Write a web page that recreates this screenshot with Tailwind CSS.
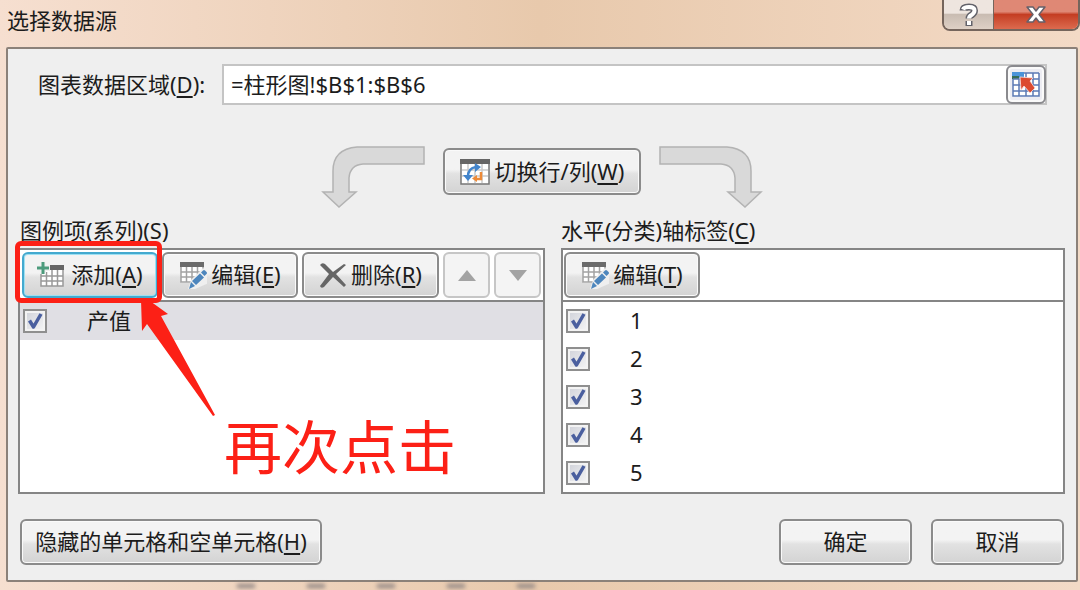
<!DOCTYPE html>
<html lang="zh-CN">
<head>
<meta charset="utf-8">
<title>选择数据源</title>
<script src="https://cdn.jsdelivr.net/npm/@tailwindcss/browser@4"></script>
</head>
<body class="relative flex min-h-screen flex-col overflow-x-hidden bg-linear-to-r from-[#f6dfd0] via-[#e8c9ac] to-[#f3dac6] font-['Noto_Sans','Noto_Sans_CJK_SC',sans-serif] text-[22px] leading-7 text-[#1c1c1c]">

<!-- Shared icons -->
<svg class="hidden" aria-hidden="true">
  <symbol id="edit" viewBox="0 0 28 28">
    <path fill="#fff" d="M2 2h22v20H2z"/>
    <path fill="none" stroke="#a3a3a3" stroke-width="1.5" d="M2 6v15h22V6M7.500 6v15M13 6v15M18.500 6v15M2 11h22M2 16h22"/>
    <path fill="#6b6b6b" d="M1 1h24v5H1z"/>
    <path fill="#efefef" d="M9 28l3-9L24 7l6 5v10L16 28z"/>
    <path fill="#4d86bd" d="M10 28l2-7 4 4zM13 20l8-7.500 4 4-8 7.500zM22 11.500l2-2q1-1 2 0l1.500 1.500q1 1 0 2l-2 2z"/>
  </symbol>
  <symbol id="tick" viewBox="0 0 24 24">
    <path fill="none" stroke="#4a5f9f" stroke-width="3.500" stroke-linejoin="round" d="M6.500 11.500l4 6.500L18 5"/>
  </symbol>
  <symbol id="bend" viewBox="0 0 104 62">
    <path fill="#d9d9d9" stroke="#b3b3b3" stroke-width="1.500" d="M103 1H36Q12 3 12 25v21H2l16 15 17-15H28V32Q29 19 42 18h61z"/>
  </symbol>
</svg>

<header class="flex h-[47px] items-start justify-between pl-[7px]">
  <h1 class="pt-1.5">选择数据源</h1>
  <div class="flex h-[31px] overflow-hidden rounded-b-lg border-2 border-t-0 border-[#75655c]">
    <button type="button" aria-label="帮助" class="grid w-[50px] place-items-center border-r border-[#75655c] bg-linear-to-b from-[#eee5df] from-45% via-[#c9bcb2] via-50% to-[#ded0c5]">
      <svg class="h-6 w-5" viewBox="0 0 20 24" fill="none"><path stroke="#62626a" stroke-width="7" d="M4 7.500Q4 4 10 4q5.500 0 5.500 3.500 0 2.500-3 4.500-2.500 1.500-2.500 3.500M10 18v5"/><path stroke="#fff" stroke-width="4" d="M4 6.500Q5 4 10 4q5.500 0 5.500 3.500 0 2.500-3 4.500-2.500 1.500-2.500 3.500M10 18v4"/></svg>
    </button>
    <button type="button" aria-label="关闭" class="grid w-[84px] place-items-center bg-linear-to-b from-[#df8875] from-40% via-[#c43d22] via-50% to-[#dc6a4e]">
      <svg class="h-5 w-6" viewBox="0 0 24 20"><path fill="#fff" stroke="#66606a" stroke-width="1.500" stroke-linejoin="round" d="M3 2h6l3 4 3-4h6l-6 7.500 6 7.500h-6l-3-4-3 4H3l6-7.500z"/></svg>
    </button>
  </div>
</header>

<main class="mr-0.5 mb-2 ml-1.5 flex flex-1 flex-col rounded-xs border-2 border-[#8b8179] bg-[#efefef]">
  <div class="mt-[15px] flex items-center pr-[29px] pl-[30px]">
    <label for="range" class="w-[184px] shrink-0 pb-0.5">图表数据区域(<u class="underline-offset-3">D</u>):</label>
    <div class="flex h-[41px] flex-1 border-2 border-[#c4c4c4] bg-white">
      <input id="range" type="text" value="=柱形图!$B$1:$B$6" class="min-w-0 flex-1 bg-transparent pb-0.5 pl-[7px] outline-none">
      <button type="button" aria-label="选择区域" class="-my-px -mr-px grid w-10 place-items-center rounded-md border-2 border-[#8a8a8e] bg-[#ececf2] shadow-[inset_0_0_0_2px_#fafafa]">
        <svg class="size-7" viewBox="0 0 28 28"><path fill="#fff" d="M1 2h26v24H1z"/><path fill="#4a93d9" d="M0 1h12v6H0z"/><path fill="#356c55" d="M0 5h7v3H0z"/><path fill="none" stroke="#5b79b5" stroke-width="1.500" d="M1 8v17h26V2M12 2h15M1 8h26M1 14h26M1 20h26M7 8v17M14 2v23M21 2v23"/><path fill="#dc4b30" stroke="#f8e0dc" stroke-width=".8" d="M8 6l13 1-3 3 5 7-5 5-6-7-3 4z"/></svg>
      </button>
    </div>
  </div>

  <div class="mt-[41px] flex items-start justify-center gap-[18px]">
    <svg class="h-[62px] w-[104px]" aria-hidden="true"><use href="#bend"/></svg>
    <button type="button" class="mt-0.5 flex h-[47px] w-[198px] items-center justify-center gap-[5px] rounded-md border-2 border-[#8b8b8b] bg-linear-to-b from-[#f3f3f3] from-45% via-[#e2e2e2] via-55% to-[#d3d3d3] shadow-[inset_0_0_0_1px_#fafafa]">
      <svg class="h-7 w-[30px]" viewBox="0 0 30 28"><path fill="#fff" stroke="#777" stroke-width="1.500" d="M1 2h28v24H1z"/><path stroke="#c9c9c9" stroke-width="1.500" d="M2 12h26M2 18h26M8 6v19M15 6v19M22 6v19"/><path fill="#666" d="M0 1h30v5H0z"/><path fill="none" stroke="#4385cc" stroke-width="2.500" d="M8 19q0-9 8-10"/><path fill="#4385cc" d="M3 17h10l-5 6zM15 5l6 4-6 5z"/><path fill="none" stroke="#ed8a38" stroke-width="2.500" d="M21 14v7h-5"/><path fill="#ed8a38" d="M17 17v7l-5-3.500z"/></svg>
      <span class="pb-0.5">切换行/列(<u class="underline-offset-3">W</u>)</span>
    </button>
    <svg class="h-[62px] w-[104px] -scale-x-100" aria-hidden="true"><use href="#bend"/></svg>
  </div>

  <div class="mt-[9px] grid flex-1 grid-cols-[527fr_505fr] gap-4 pr-[11px] pl-2.5">
    <section class="flex flex-col" aria-labelledby="series">
      <h2 id="series" class="-mt-px h-8 pl-0.5">图例项(系列)(S)</h2>
      <div class="relative flex-1 border-2 border-[#858585] bg-white">
        <div class="flex h-[52px] items-center gap-1 border-b-2 border-[#858585] px-0.5">
          <div class="relative">
            <button type="button" class="flex h-[46px] w-[136px] items-center justify-center gap-1.5 rounded-md border-2 border-[#43a9cf] bg-linear-to-b from-[#f3f3f3] from-45% via-[#e2e2e2] via-55% to-[#d3d3d3] shadow-[inset_0_0_0_1px_#9de0f2]">
              <svg class="size-7" viewBox="0 0 28 28"><path fill="#fff" d="M4 7h22v18H4z"/><path fill="none" stroke="#999" stroke-width="1.500" d="M4 11v14h22V5M9.500 11v14M15 9v16M20.500 9v16M4 15h22M4 20h22"/><path fill="#666" d="M13 4h14v5H13z"/><path stroke="#f0f0f0" stroke-width="6" d="M6 1v12M1 7h12"/><path stroke="#4c9b7c" stroke-width="3" d="M6 1v12M0 7h12"/></svg>
              <span class="pb-0.5">添加(<u class="underline-offset-3">A</u>)</span>
            </button>
            <!-- Highlight frame around the add button -->
            <div class="pointer-events-none absolute -top-[11px] -right-1 -bottom-[5px] -left-[7px] z-10 rounded-md border-5 border-[#fc2016]"></div>
          </div>
          <button type="button" class="flex h-[46px] w-[136px] items-center justify-center gap-1 rounded-md border-2 border-[#8b8b8b] bg-linear-to-b from-[#f3f3f3] from-45% via-[#e2e2e2] via-55% to-[#d3d3d3] shadow-[inset_0_0_0_1px_#fafafa]">
            <svg class="size-7" aria-hidden="true"><use href="#edit"/></svg><span class="pb-0.5">编辑(<u class="underline-offset-3">E</u>)</span>
          </button>
          <button type="button" class="flex h-[46px] w-[137px] items-center justify-center gap-1 rounded-md border-2 border-[#8b8b8b] bg-linear-to-b from-[#f3f3f3] from-45% via-[#e2e2e2] via-55% to-[#d3d3d3] shadow-[inset_0_0_0_1px_#fafafa]">
            <svg class="size-7" viewBox="0 0 28 28"><path fill="#666" d="M1 4q2-3 5-1l8 8 11-8 2 1-10 9 10 11-2 2-11-10-9 10q-3 2-4-1l9-12z"/></svg><span class="pb-0.5">删除(<u class="underline-offset-3">R</u>)</span>
          </button>
          <button type="button" disabled aria-label="上移" class="grid h-[46px] w-[47px] place-items-center rounded-md border-2 border-[#c6c6c6] bg-[#f4f4f4]"><svg class="h-[11px] w-[18px]" viewBox="0 0 18 11"><path fill="#a3a3a3" d="M9 0l9 11H0z"/></svg></button>
          <button type="button" disabled aria-label="下移" class="grid h-[46px] w-[47px] place-items-center rounded-md border-2 border-[#c6c6c6] bg-[#f4f4f4]"><svg class="h-[11px] w-[18px]" viewBox="0 0 18 11"><path fill="#a3a3a3" d="M9 11l9-11H0z"/></svg></button>
        </div>
        <label class="flex h-[38px] items-center gap-10 bg-[#e0dfe4] pl-[3px]">
          <span class="grid size-6"><input type="checkbox" checked class="peer col-start-1 row-start-1 appearance-none border-2 border-[#8f8f8f] bg-linear-to-br from-[#cfd1d9] to-[#f6f6f6] shadow-[inset_0_0_0_2px_#f3f3f3]"><svg class="pointer-events-none col-start-1 row-start-1 hidden size-6 peer-checked:block" aria-hidden="true"><use href="#tick"/></svg></span>
          <span class="pb-0.5">产值</span>
        </label>
        <!-- Callout over the list -->
        <svg class="pointer-events-none absolute top-[50px] left-[120px] z-10 h-[117px] w-[76px]" viewBox="140 300 76 117" aria-hidden="true"><path fill="#fc2016" d="M141 300l9 1 18 13-7 2 54 99-2 1-66-92-5 7z"/></svg>
        <p class="pointer-events-none absolute top-[163px] left-[204px] text-[58px] leading-[68px] whitespace-nowrap text-[#fc2016]">再次点击</p>
      </div>
    </section>

    <section class="flex flex-col" aria-labelledby="axis">
      <h2 id="axis" class="-mt-px h-8">水平(分类)轴标签(<u class="underline-offset-3">C</u>)</h2>
      <div class="flex-1 border-2 border-[#858585] bg-white">
        <div class="flex h-[52px] items-center border-b-2 border-[#858585] px-px">
          <button type="button" class="flex h-[46px] w-[136px] items-center justify-center gap-1 rounded-md border-2 border-[#8b8b8b] bg-linear-to-b from-[#f3f3f3] from-45% via-[#e2e2e2] via-55% to-[#d3d3d3] shadow-[inset_0_0_0_1px_#fafafa]">
            <svg class="size-7" aria-hidden="true"><use href="#edit"/></svg><span class="pb-0.5">编辑(<u class="underline-offset-3">T</u>)</span>
          </button>
        </div>
        <ul id="categories">
          <li><label class="flex h-[38px] items-center gap-10 pl-[3px]"><span class="grid size-6"><input type="checkbox" checked class="peer col-start-1 row-start-1 appearance-none border-2 border-[#8f8f8f] bg-linear-to-br from-[#cfd1d9] to-[#f6f6f6] shadow-[inset_0_0_0_2px_#f3f3f3]"><svg class="pointer-events-none col-start-1 row-start-1 hidden size-6 peer-checked:block" aria-hidden="true"><use href="#tick"/></svg></span><span class="pb-0.5">1</span></label></li>
          <li><label class="flex h-[38px] items-center gap-10 pl-[3px]"><span class="grid size-6"><input type="checkbox" checked class="peer col-start-1 row-start-1 appearance-none border-2 border-[#8f8f8f] bg-linear-to-br from-[#cfd1d9] to-[#f6f6f6] shadow-[inset_0_0_0_2px_#f3f3f3]"><svg class="pointer-events-none col-start-1 row-start-1 hidden size-6 peer-checked:block" aria-hidden="true"><use href="#tick"/></svg></span><span class="pb-0.5">2</span></label></li>
          <li><label class="flex h-[38px] items-center gap-10 pl-[3px]"><span class="grid size-6"><input type="checkbox" checked class="peer col-start-1 row-start-1 appearance-none border-2 border-[#8f8f8f] bg-linear-to-br from-[#cfd1d9] to-[#f6f6f6] shadow-[inset_0_0_0_2px_#f3f3f3]"><svg class="pointer-events-none col-start-1 row-start-1 hidden size-6 peer-checked:block" aria-hidden="true"><use href="#tick"/></svg></span><span class="pb-0.5">3</span></label></li>
          <li><label class="flex h-[38px] items-center gap-10 pl-[3px]"><span class="grid size-6"><input type="checkbox" checked class="peer col-start-1 row-start-1 appearance-none border-2 border-[#8f8f8f] bg-linear-to-br from-[#cfd1d9] to-[#f6f6f6] shadow-[inset_0_0_0_2px_#f3f3f3]"><svg class="pointer-events-none col-start-1 row-start-1 hidden size-6 peer-checked:block" aria-hidden="true"><use href="#tick"/></svg></span><span class="pb-0.5">4</span></label></li>
          <li><label class="flex h-[38px] items-center gap-10 pl-[3px]"><span class="grid size-6"><input type="checkbox" checked class="peer col-start-1 row-start-1 appearance-none border-2 border-[#8f8f8f] bg-linear-to-br from-[#cfd1d9] to-[#f6f6f6] shadow-[inset_0_0_0_2px_#f3f3f3]"><svg class="pointer-events-none col-start-1 row-start-1 hidden size-6 peer-checked:block" aria-hidden="true"><use href="#tick"/></svg></span><span class="pb-0.5">5</span></label></li>
        </ul>
      </div>
    </section>
  </div>

  <footer class="mt-[25px] mb-[15px] flex gap-[19px] pr-3 pl-3">
    <button type="button" class="mr-auto h-[46px] w-[302px] rounded-md border-2 border-[#8b8b8b] bg-linear-to-b from-[#f3f3f3] from-45% via-[#e2e2e2] via-55% to-[#d3d3d3] pb-0.5 shadow-[inset_0_0_0_1px_#fafafa]">隐藏的单元格和空单元格(<u class="underline-offset-3">H</u>)</button>
    <button type="button" class="h-[46px] w-[133px] rounded-md border-2 border-[#8b8b8b] bg-linear-to-b from-[#f3f3f3] from-45% via-[#e2e2e2] via-55% to-[#d3d3d3] pb-0.5 shadow-[inset_0_0_0_1px_#fafafa]">确定</button>
    <button type="button" class="h-[46px] w-[133px] rounded-md border-2 border-[#8b8b8b] bg-linear-to-b from-[#f3f3f3] from-45% via-[#e2e2e2] via-55% to-[#d3d3d3] pb-0.5 shadow-[inset_0_0_0_1px_#fafafa]">取消</button>
  </footer>
</main>

<!-- Dark marks showing through the translucent window edge -->
<div class="pointer-events-none absolute bottom-0.5 left-[237px] flex gap-[52px]" aria-hidden="true">
  <i class="h-1 w-[18px] bg-[#8f8583] blur-[2px]"></i><i class="h-1 w-[18px] bg-[#8f8583] blur-[2px]"></i><i class="h-1 w-[18px] bg-[#8f8583] blur-[2px]"></i><i class="h-1 w-[18px] bg-[#8f8583] blur-[2px]"></i><i class="h-1 w-[18px] bg-[#8f8583] blur-[2px]"></i>
</div>
</body>
</html>
